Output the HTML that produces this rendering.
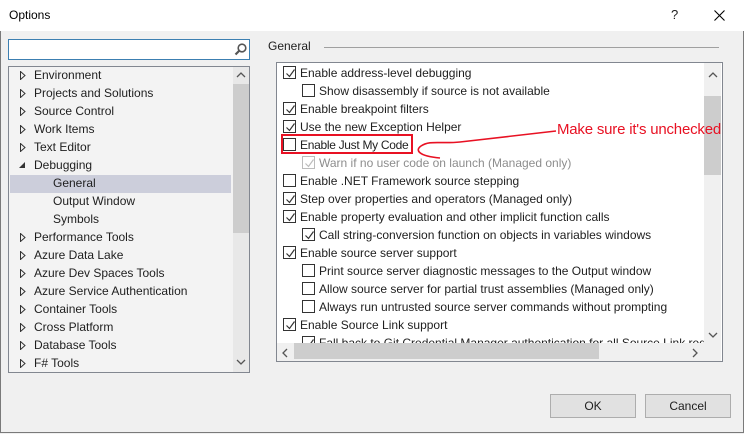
<!DOCTYPE html>
<html><head><style>
*{box-sizing:border-box;margin:0;padding:0}
body{width:744px;height:434px;overflow:hidden;background:#f0f0f0;font-family:"Liberation Sans",sans-serif;font-size:12px;color:#1e1e1e;position:relative}
.win{position:absolute;left:0;top:0;width:744px;height:433px;border:1px solid #7a7a7a;border-top:none}
.title{position:absolute;left:0;top:0;width:744px;height:31px;background:#fff}
.abs{position:absolute;white-space:nowrap}
.row{position:absolute;height:18px;line-height:19px;white-space:nowrap}
.cb{position:absolute;width:13px;height:13px;border:1px solid #333;background:#fff}
.cb svg{position:absolute;left:1px;top:1px}
</style></head><body>
<div class="win"></div>
<div class="title"></div>
<div class="abs" style="left:9px;top:8px;font-size:12px;color:#000">Options</div>
<div class="abs" style="left:671px;top:7px;font-size:13px">?</div>
<svg class="abs" style="left:714px;top:10px" width="11" height="11"><path d="M0.5 0.5L10.5 10.5M10.5 0.5L0.5 10.5" stroke="#000" stroke-width="1.1"/></svg>

<div class="abs" style="left:8px;top:39px;width:242px;height:21px;border:1px solid #3c7fb1;background:#fff"></div>
<svg class="abs" style="left:234px;top:43px" width="13" height="13"><circle cx="8" cy="5" r="3.8" fill="none" stroke="#555" stroke-width="1.6"/><path d="M5.5 7.5L1.5 11.5" stroke="#555" stroke-width="2.2"/></svg>

<div class="abs" style="left:8px;top:66px;width:242px;height:307px;border:1px solid #828790;background:#f3f3f3"></div>
<div class="abs" style="left:233px;top:67px;width:16px;height:305px;background:#e8e8e8"></div>
<div class="abs" style="left:233px;top:84px;width:16px;height:149px;background:#cdcdcd"></div>
<svg class="abs" style="left:236px;top:72px" width="10" height="6"><path d="M1 5L5 1L9 5" fill="none" stroke="#555" stroke-width="1.3"/></svg>
<svg class="abs" style="left:236px;top:359px" width="10" height="6"><path d="M1 1L5 5L9 1" fill="none" stroke="#555" stroke-width="1.3"/></svg>
<div class="abs" style="left:10px;top:175px;width:221px;height:18px;background:#cccedb"></div>
<div id="tree"></div>

<div class="abs" style="left:268px;top:39px">General</div>
<div class="abs" style="left:324px;top:47px;width:395px;height:1px;background:#a0a0a0"></div>
<div class="abs" style="left:276px;top:62px;width:447px;height:300px;border:1px solid #828790;background:#fff"></div>
<div class="abs" style="left:704px;top:63px;width:17px;height:280px;background:#f0f0f0"></div>
<div class="abs" style="left:704px;top:96px;width:17px;height:79px;background:#cdcdcd"></div>
<svg class="abs" style="left:708px;top:72px" width="10" height="6"><path d="M1 5L5 1L9 5" fill="none" stroke="#555" stroke-width="1.3"/></svg>
<svg class="abs" style="left:708px;top:332px" width="10" height="6"><path d="M1 1L5 5L9 1" fill="none" stroke="#555" stroke-width="1.3"/></svg>
<div class="abs" style="left:277px;top:343px;width:444px;height:18px;background:#f0f0f0"></div>
<div class="abs" style="left:294px;top:343px;width:305px;height:16px;background:#cdcdcd"></div>
<svg class="abs" style="left:282px;top:348px" width="6" height="10"><path d="M5 1L1 5L5 9" fill="none" stroke="#555" stroke-width="1.3"/></svg>
<svg class="abs" style="left:692px;top:348px" width="6" height="10"><path d="M1 1L5 5L1 9" fill="none" stroke="#555" stroke-width="1.3"/></svg>
<div class="abs" style="left:277px;top:63px;width:427px;height:280px;overflow:hidden" id="opts"></div>

<div class="abs" style="left:281px;top:134px;width:132px;height:20px;border:2px solid #e81123"></div>
<div class="abs" style="left:557px;top:121px;font-size:15px;color:#e81123;letter-spacing:-0.2px">Make sure it's unchecked</div>
<svg class="abs" style="left:410px;top:120px" width="150" height="40"><path d="M146 11L50 22C30 24 20 20 11 26C5 30 8 36 30 38" fill="none" stroke="#e81123" stroke-width="1.6"/></svg>

<div class="abs" style="left:550px;top:394px;width:86px;height:24px;border:1px solid #adadad;background:#e1e1e1;text-align:center;line-height:22px">OK</div>
<div class="abs" style="left:645px;top:394px;width:86px;height:24px;border:1px solid #adadad;background:#e1e1e1;text-align:center;line-height:22px">Cancel</div>

<script>
var t=[["Environment",1],["Projects and Solutions",1],["Source Control",1],["Work Items",1],["Text Editor",1],["Debugging",2],["General",0],["Output Window",0],["Symbols",0],["Performance Tools",1],["Azure Data Lake",1],["Azure Dev Spaces Tools",1],["Azure Service Authentication",1],["Container Tools",1],["Cross Platform",1],["Database Tools",1],["F# Tools",1]];
var h="";t.forEach(function(r,i){var y=66+i*18;
if(r[1]==1)h+='<svg class="abs" style="left:20px;top:'+(y+5)+'px" width="6" height="9"><path d="M0.5 0.5L5 4.5L0.5 8.5Z" fill="none" stroke="#333"/></svg>';
if(r[1]==2)h+='<svg class="abs" style="left:19px;top:'+(y+6)+'px" width="7" height="7"><path d="M6 0L6 6L0 6Z" fill="#333"/></svg>';
h+='<div class="row" style="left:'+(r[1]?34:53)+'px;top:'+y+'px">'+r[0]+'</div>';});
document.getElementById("tree").innerHTML=h;
var o=[["Enable address-level debugging",0,1],["Show disassembly if source is not available",1,0],["Enable breakpoint filters",0,1],["Use the new Exception Helper",0,1],["Enable Just My Code",0,0],["Warn if no user code on launch (Managed only)",1,2],["Enable .NET Framework source stepping",0,0],["Step over properties and operators (Managed only)",0,1],["Enable property evaluation and other implicit function calls",0,1],["Call string-conversion function on objects in variables windows",1,1],["Enable source server support",0,1],["Print source server diagnostic messages to the Output window",1,0],["Allow source server for partial trust assemblies (Managed only)",1,0],["Always run untrusted source server commands without prompting",1,0],["Enable Source Link support",0,1],["Fall back to Git Credential Manager authentication for all Source Link requests",1,1]];
h="";o.forEach(function(r,i){var y=i*18+1;var x=r[1]?25:6;var dis=r[2]==2;
h+='<div class="cb" style="left:'+x+'px;top:'+(y+2)+'px;'+(dis?'border-color:#bcbcbc':'')+'">'+(r[2]?'<svg width="11" height="11"><path d="M1.5 5.5L4.5 8.5L9.5 1.5" fill="none" stroke="'+(dis?'#bcbcbc':'#333')+'" stroke-width="1.2"/></svg>':'')+'</div>';
h+='<div class="row" style="left:'+(x+17)+'px;top:'+y+'px;'+(dis?'color:#8d8d8d':'')+(i==4?';letter-spacing:-0.3px':'')+'">'+r[0]+'</div>';});
document.getElementById("opts").innerHTML=h;
</script>
</body></html>
